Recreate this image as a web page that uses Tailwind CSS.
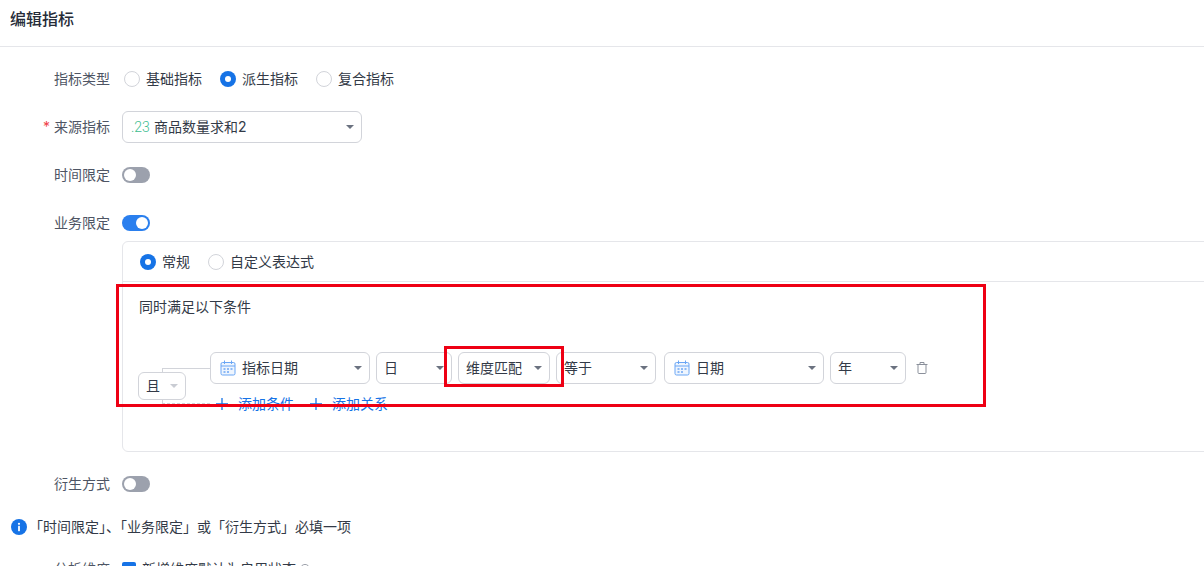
<!DOCTYPE html>
<html lang="zh">
<head>
<meta charset="utf-8">
<script src="https://cdn.jsdelivr.net/npm/@tailwindcss/browser@4"></script>
</head>
<body class="bg-white">
<div class="relative w-[1204px] h-[566px] overflow-hidden font-['Inter','Noto_Sans_CJK_SC',sans-serif] text-sm text-[#333a47]">
  <header class="h-[47px] border-b border-[#e5e6ea] pl-[10px] pt-[7px] text-base leading-6 font-medium text-[#262c38]">编辑指标</header>

  <div class="flex items-center h-8 mt-4">
    <div class="w-[110px] text-right text-[#4e5564]">指标类型</div>
    <div class="flex items-center ml-[14px] gap-[18px]">
      <label class="flex items-center gap-[6px]"><span class="w-4 h-4 rounded-full border border-[#d2d4da] bg-white"></span>基础指标</label>
      <label class="flex items-center gap-[6px]"><span class="w-4 h-4 rounded-full bg-[#1673e6] flex items-center justify-center"><span class="w-[6px] h-[6px] rounded-full bg-white"></span></span>派生指标</label>
      <label class="flex items-center gap-[6px]"><span class="w-4 h-4 rounded-full border border-[#d2d4da] bg-white"></span>复合指标</label>
    </div>
  </div>

  <div class="flex items-center h-8 mt-4">
    <div class="w-[110px] text-right text-[#4e5564]"><span class="text-[#f0414a] mr-[4px]">*</span>来源指标</div>
    <div class="ml-3 w-[240px] h-8 border border-[#d2d4da] rounded-md flex items-center pl-2 pr-[7px]">
      <span class="font-['Roboto'] text-[#3ebd8f] mr-1 font-light">.23</span><span class="flex-1">商品数量求和2</span>
      <span class="w-0 h-0 border-x-4 border-x-transparent border-t-4 border-t-[#6b7280]"></span>
    </div>
  </div>

  <div class="flex items-center h-4 mt-6">
    <div class="w-[110px] text-right text-[#4e5564]">时间限定</div>
    <div class="ml-3 w-7 h-4 rounded-full bg-[#9ca1ad] p-[2px] flex justify-start"><span class="w-3 h-3 rounded-full bg-white"></span></div>
  </div>

  <div class="flex items-center h-4 mt-8">
    <div class="w-[110px] text-right text-[#4e5564]">业务限定</div>
    <div class="ml-3 w-7 h-4 rounded-full bg-[#2a7fee] p-[2px] flex justify-end"><span class="w-3 h-3 rounded-full bg-white"></span></div>
  </div>

  <section class="ml-[122px] mt-[10px] w-[1200px] h-[211px] border border-[#e5e6ea] rounded-md">
    <div class="h-10 border-b border-[#e5e6ea] flex items-center pl-[17px] gap-[18px]">
      <label class="flex items-center gap-[6px]"><span class="w-4 h-4 rounded-full bg-[#1673e6] flex items-center justify-center"><span class="w-[6px] h-[6px] rounded-full bg-white"></span></span>常规</label>
      <label class="flex items-center gap-[6px]"><span class="w-4 h-4 rounded-full border border-[#d2d4da] bg-white"></span>自定义表达式</label>
    </div>
    <div class="pl-4 pt-[14px] leading-[22px]">同时满足以下条件</div>

    <div class="relative flex items-center ml-[87px] mt-[34px] h-8">
      <div class="absolute left-[-48px] top-4 w-[48px] h-[36px] border-l border-t border-[#d2d4da]"></div>
      <div class="absolute left-[-48px] top-[36px] w-[48px] h-[16px] border-l border-b border-dashed border-[#d2d4da]"></div>
      <div class="absolute left-[-72px] top-5 w-12 h-7 border border-[#d2d4da] rounded-md bg-white flex items-center pl-[7px]">且<span class="ml-[10px] w-0 h-0 border-x-4 border-x-transparent border-t-4 border-t-[#c9ccd3]"></span></div>

      <div class="w-40 h-8 border border-[#d2d4da] rounded-md flex items-center pl-[9px] pr-[7px]">
        <svg class="w-4 h-4 mr-[6px] shrink-0" viewBox="0 0 16 16" fill="none"><rect x="1" y="2.5" width="14" height="12.5" rx="1.5" fill="#eef5fe" stroke="#6aa6f5"/><path d="M1 6h14M4.5 0.5v3.5M11.5 0.5v3.5" stroke="#6aa6f5"/><path d="M3.5 9h2M7 9h2M10.5 9h2M3.5 12h2M7 12h2" stroke="#2a7fee" stroke-width="1.2"/></svg>
        <span class="flex-1">指标日期</span><span class="w-0 h-0 border-x-4 border-x-transparent border-t-4 border-t-[#6b7280]"></span>
      </div>
      <div class="ml-[6px] w-[76px] h-8 border border-[#d2d4da] rounded-md flex items-center pl-[7px] pr-[7px]">
        <span class="flex-1">日</span><span class="w-0 h-0 border-x-4 border-x-transparent border-t-4 border-t-[#6b7280]"></span>
      </div>
      <div class="ml-[6px] w-[92px] h-8 border border-[#d2d4da] rounded-md flex items-center pl-[7px] pr-[7px]">
        <span class="flex-1">维度匹配</span><span class="w-0 h-0 border-x-4 border-x-transparent border-t-4 border-t-[#6b7280]"></span>
      </div>
      <div class="ml-[6px] w-[100px] h-8 border border-[#d2d4da] rounded-md flex items-center pl-[7px] pr-[7px]">
        <span class="flex-1">等于</span><span class="w-0 h-0 border-x-4 border-x-transparent border-t-4 border-t-[#6b7280]"></span>
      </div>
      <div class="ml-2 w-40 h-8 border border-[#d2d4da] rounded-md flex items-center pl-[9px] pr-[7px]">
        <svg class="w-4 h-4 mr-[6px] shrink-0" viewBox="0 0 16 16" fill="none"><rect x="1" y="2.5" width="14" height="12.5" rx="1.5" fill="#eef5fe" stroke="#6aa6f5"/><path d="M1 6h14M4.5 0.5v3.5M11.5 0.5v3.5" stroke="#6aa6f5"/><path d="M3.5 9h2M7 9h2M10.5 9h2M3.5 12h2M7 12h2" stroke="#2a7fee" stroke-width="1.2"/></svg>
        <span class="flex-1">日期</span><span class="w-0 h-0 border-x-4 border-x-transparent border-t-4 border-t-[#6b7280]"></span>
      </div>
      <div class="ml-[6px] w-[76px] h-8 border border-[#d2d4da] rounded-md flex items-center pl-[7px] pr-[7px]">
        <span class="flex-1">年</span><span class="w-0 h-0 border-x-4 border-x-transparent border-t-4 border-t-[#6b7280]"></span>
      </div>
      <svg class="ml-[10px] w-3 h-3 shrink-0" viewBox="0 0 12 12" fill="none" stroke="#8b909b" stroke-width="1"><path d="M0.5 2.5h11M4 2.5V0.5h4v2M2 2.5v8a1 1 0 0 0 1 1h6a1 1 0 0 0 1-1v-8"/></svg>
    </div>

    <div class="flex items-center ml-[93px] mt-[9px] h-[22px] text-[#1673e6]">
      <svg class="w-3 h-3 mr-[10px] shrink-0" viewBox="0 0 12 12" stroke="currentColor" stroke-width="1.3"><path d="M6 0v12M0 6h12"/></svg>
      <span>添加条件</span>
      <svg class="w-3 h-3 ml-4 mr-[10px] shrink-0" viewBox="0 0 12 12" stroke="currentColor" stroke-width="1.3"><path d="M6 0v12M0 6h12"/></svg>
      <span>添加关系</span>
    </div>
  </section>

  <div class="flex items-center h-4 mt-6">
    <div class="w-[110px] text-right text-[#4e5564]">衍生方式</div>
    <div class="ml-3 w-7 h-4 rounded-full bg-[#9ca1ad] p-[2px] flex justify-start"><span class="w-3 h-3 rounded-full bg-white"></span></div>
  </div>

  <div class="flex items-center h-[22px] mt-6 pl-[11px]">
    <svg class="w-4 h-4 mr-[2px] shrink-0" viewBox="0 0 16 16"><circle cx="8" cy="8" r="8" fill="#1673e6"/><rect x="7.1" y="6.8" width="1.8" height="5.4" rx="0.4" fill="#fff"/><circle cx="8" cy="4.8" r="1.1" fill="#fff"/></svg>
    <span>「时间限定」、「业务限定」或「衍生方式」必填一项</span>
  </div>

  <div class="flex items-center h-[22px] mt-5">
    <div class="w-[110px] text-right text-[#4e5564]">分析维度</div>
    <span class="ml-3 w-[14px] h-[14px] rounded-[2px] bg-[#1673e6]"></span>
    <span class="ml-[6px]">新增维度默认为启用状态</span>
    <svg class="ml-[4px] w-[10px] h-[10px]" viewBox="0 0 12 12" fill="none" stroke="#8b909b"><circle cx="6" cy="6" r="5.5"/></svg>
  </div>

  <div class="absolute left-[116px] top-[284px] w-[870px] h-[123px] border-[3px] border-[#ee0014] pointer-events-none"></div>
  <div class="absolute left-[444px] top-[346px] w-[120px] h-[41px] border-[3px] border-[#ee0014] pointer-events-none"></div>
</div>
</body>
</html>
